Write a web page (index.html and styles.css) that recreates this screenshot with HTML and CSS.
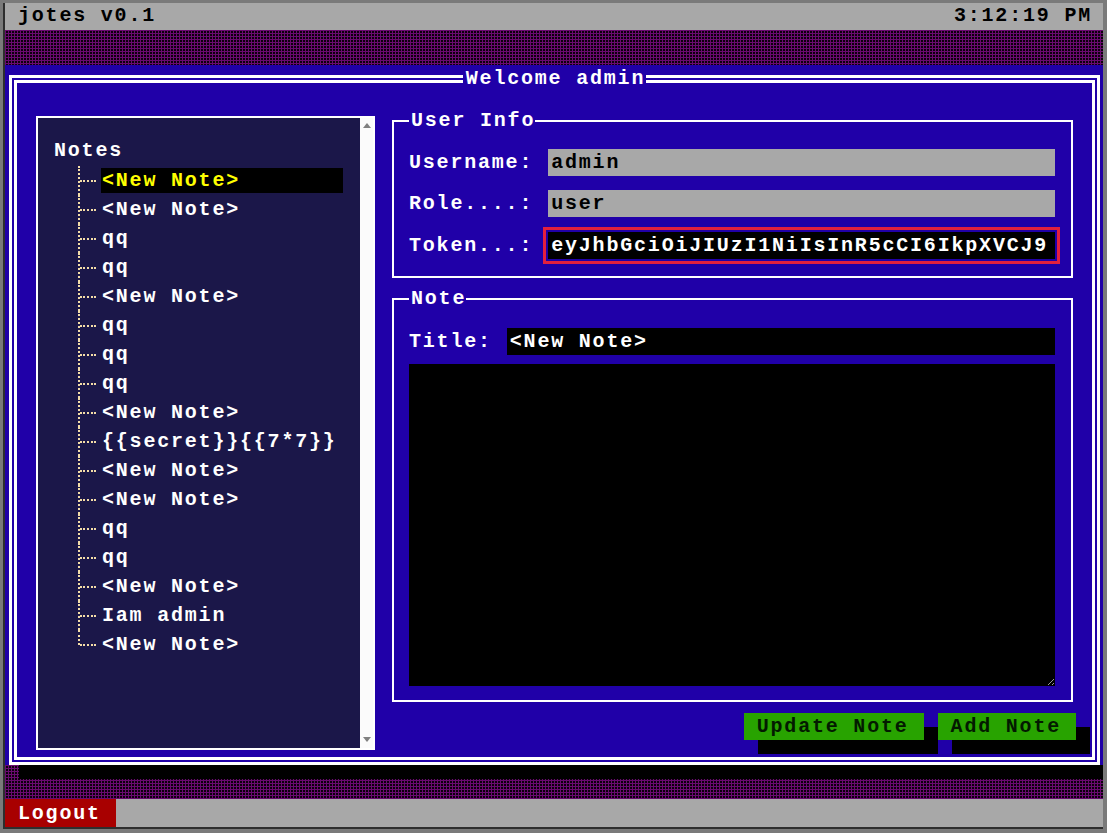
FILE: index.html
```html
<!DOCTYPE html>
<html lang="en">
<head>
<meta charset="utf-8">
<title>jotes v0.1</title>
<link rel="stylesheet" href="styles.css">
</head>
<body>
<div class="screen">
  <header class="topbar"><span class="app-name">jotes v0.1</span><span class="clock">3:12:19 PM</span></header>
  <main class="desk">
    <div class="window">
      <fieldset class="frame">
        <legend class="frame-title">Welcome admin</legend>
        <div class="layout">
          <aside class="tree-panel">
            <div class="tree-scroll">
              <div class="tree-root">Notes</div>
              <ul class="tree">
                <li class="tree-item selected"><span class="tree-label">&lt;New Note&gt;</span></li>
                <li class="tree-item"><span class="tree-label">&lt;New Note&gt;</span></li>
                <li class="tree-item"><span class="tree-label">qq</span></li>
                <li class="tree-item"><span class="tree-label">qq</span></li>
                <li class="tree-item"><span class="tree-label">&lt;New Note&gt;</span></li>
                <li class="tree-item"><span class="tree-label">qq</span></li>
                <li class="tree-item"><span class="tree-label">qq</span></li>
                <li class="tree-item"><span class="tree-label">qq</span></li>
                <li class="tree-item"><span class="tree-label">&lt;New Note&gt;</span></li>
                <li class="tree-item"><span class="tree-label">{{secret}}{{7*7}}</span></li>
                <li class="tree-item"><span class="tree-label">&lt;New Note&gt;</span></li>
                <li class="tree-item"><span class="tree-label">&lt;New Note&gt;</span></li>
                <li class="tree-item"><span class="tree-label">qq</span></li>
                <li class="tree-item"><span class="tree-label">qq</span></li>
                <li class="tree-item"><span class="tree-label">&lt;New Note&gt;</span></li>
                <li class="tree-item"><span class="tree-label">Iam admin</span></li>
                <li class="tree-item"><span class="tree-label">&lt;New Note&gt;</span></li>
              </ul>
            </div>
            <div class="scrollbar"><span class="arrow arrow-up"></span><span class="arrow arrow-down"></span></div>
          </aside>
          <section class="details">
            <fieldset class="box">
              <legend class="box-title">User Info</legend>
              <div class="fields">
                <div class="field"><label class="field-label">Username:</label><input class="input input-gray" value="admin" readonly></div>
                <div class="field"><label class="field-label">Role....:</label><input class="input input-gray" value="user" readonly></div>
                <div class="field field-token"><label class="field-label">Token...:</label><input class="input input-dark input-focus" value="eyJhbGciOiJIUzI1NiIsInR5cCI6IkpXVCJ9.eyJ1c2VybmFtZSI6ImFkbWluIiwicm9sZSI6InVzZXIifQ" readonly></div>
              </div>
            </fieldset>
            <fieldset class="box note-box">
              <legend class="box-title">Note</legend>
              <div class="field"><label class="field-label">Title:</label><input class="input input-dark" value="&lt;New Note&gt;"></div>
              <textarea class="note-body"></textarea>
            </fieldset>
            <div class="actions">
              <button class="btn">Update Note</button>
              <button class="btn">Add Note</button>
            </div>
          </section>
        </div>
      </fieldset>
    </div>
  </main>
  <footer class="bottombar"><button class="logout">Logout</button></footer>
</div>
</body>
</html>
```

FILE: styles.css
```css
* {
  box-sizing: border-box;
}

html, body {
  margin: 0;
  padding: 0;
}

body {
  background: #7a7a7a;
  font-family: "Liberation Mono", "DejaVu Sans Mono", monospace;
  font-weight: bold;
  font-size: 20px;
  letter-spacing: 1.8px;
  color: #fff;
}

.screen {
  margin: 3px 4px 4px 3px;
  height: 826px;
  border-left: 2px solid #2e2e2e;
  border-bottom: 2px solid #2e2e2e;
  display: flex;
  flex-direction: column;
  overflow: hidden;
}

.topbar {
  height: 27px;
  flex: none;
  background: #a8a8a8;
  color: #000;
  display: flex;
  justify-content: space-between;
  align-items: center;
  padding: 0 11px 2px 13px;
  line-height: 25px;
}

.desk {
  flex: 1;
  padding-top: 35px;
  background-color: #0c000c;
  background-image:
    linear-gradient(90deg, #6a0a70 1px, transparent 1px),
    linear-gradient(#6a0a70 1px, transparent 1px);
  background-size: 3px 3px;
}

.window {
  height: 700px;
  background: #2000a8;
  padding: 0 3px 0 4px;
  box-shadow: 14px 14px 0 #000;
}

.frame {
  height: 100%;
  margin: 0;
  min-width: 0;
  border: 8px double #fff;
  padding: 15px 19px 7px 19px;
}

.frame-title {
  margin: 0 auto;
  padding: 0 1px 0 3px;
  line-height: 28px;
}

.layout {
  display: grid;
  grid-template-columns: 339px 1fr;
  column-gap: 17px;
  align-items: start;
}

.tree-panel {
  margin-top: 8px;
  height: 634px;
  border: 2px solid #fff;
  background: #1b1749;
  display: flex;
}

.tree-scroll {
  flex: 1;
  padding: 18px 17px 0 16px;
  overflow: hidden;
}

.tree-root {
  line-height: 30px;
  height: 30px;
}

.tree {
  list-style: none;
  margin: 0;
  padding: 0 0 0 24px;
}

.tree-item {
  position: relative;
  height: 29px;
  padding: 2px 0 0 23px;
}

.tree-item::before {
  content: "";
  position: absolute;
  left: 0;
  top: 0;
  bottom: 0;
  border-left: 2px dotted #f3dca8;
}

.tree-item:last-child::before {
  bottom: 14px;
}

.tree-item::after {
  content: "";
  position: absolute;
  left: 2px;
  top: 14px;
  width: 16px;
  border-top: 2px dotted #f3dca8;
}

.tree-label {
  display: block;
  height: 25px;
  line-height: 25px;
  padding-left: 1px;
  white-space: nowrap;
}

.selected .tree-label {
  background: #000;
  color: #ffff00;
}

.scrollbar {
  width: 13px;
  flex: none;
  background: #fbfbfb;
  display: flex;
  flex-direction: column;
  justify-content: space-between;
  align-items: center;
  padding: 5px 0 6px;
}

.arrow {
  width: 0;
  height: 0;
  border-left: 4.5px solid transparent;
  border-right: 4.5px solid transparent;
}

.arrow-up {
  border-bottom: 5px solid #808080;
}

.arrow-down {
  border-top: 5px solid #808080;
}

.details {
  display: flex;
  flex-direction: column;
  min-width: 0;
}

.box {
  margin: 0;
  min-width: 0;
  border: 2px solid #fff;
  padding: 15px 16px 17px 15px;
}

.box-title {
  padding: 0 0 0 2px;
  line-height: 26px;
}

.note-box {
  margin-top: 8px;
  padding: 16px 16px 14px 15px;
}

.fields {
  display: flex;
  flex-direction: column;
  gap: 14px;
}

.field {
  display: flex;
  align-items: center;
  gap: 15px;
  height: 27px;
}

.field-token {
  margin-top: 1px;
}

.field-label {
  white-space: nowrap;
}

.input {
  flex: 1;
  min-width: 0;
  height: 27px;
  border: none;
  padding: 0 3px;
  font: inherit;
  letter-spacing: inherit;
  outline: none;
}

.input-gray {
  background: #a8a8a8;
  color: #000;
}

.input-dark {
  background: #000;
  color: #fff;
}

.input-focus {
  padding: 0 6px 0 3px;
  outline: 3px solid #e3203e;
  outline-offset: 2px;
}

.note-body {
  display: block;
  width: 100%;
  height: 322px;
  margin-top: 9px;
  background: #000;
  color: #fff;
  border: none;
  font: inherit;
  outline: none;
}

.actions {
  display: flex;
  justify-content: flex-end;
  gap: 14px;
  margin-top: 11px;
  margin-right: -3px;
}

.btn {
  height: 27px;
  border: none;
  padding: 0 15px 0 13px;
  background: #28a300;
  color: #031a00;
  font: inherit;
  letter-spacing: inherit;
  line-height: 27px;
  box-shadow: 14px 14px 0 #000;
}

.bottombar {
  height: 28px;
  flex: none;
  background: #a8a8a8;
  display: flex;
}

.logout {
  height: 28px;
  border: none;
  background: #a80000;
  color: #fff;
  font: inherit;
  letter-spacing: inherit;
  padding: 0 15px 0 13px;
}
```
